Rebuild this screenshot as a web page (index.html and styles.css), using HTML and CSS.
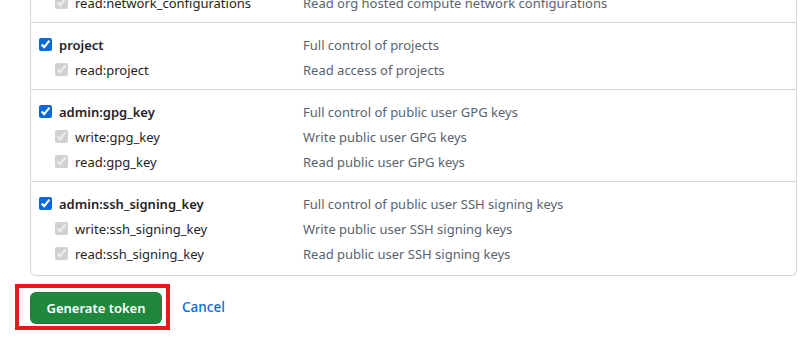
FILE: index.html
```html
<!DOCTYPE html>
<html>
<head>
<meta charset="utf-8">
<title>New token scopes</title>
<link rel="stylesheet" href="styles.css">
</head>
<body>
<div class="scopes">
	<div class="group group-cut">
		<div class="row child">
			<label><input type="checkbox" checked disabled>read:network_configurations</label>
			<span class="desc">Read org hosted compute network configurations</span>
		</div>
	</div>
	<div class="group">
		<div class="row parent">
			<label><input type="checkbox" checked>project</label>
			<span class="desc">Full control of projects</span>
		</div>
		<div class="row child">
			<label><input type="checkbox" checked disabled>read:project</label>
			<span class="desc">Read access of projects</span>
		</div>
	</div>
	<div class="group">
		<div class="row parent">
			<label><input type="checkbox" checked>admin:gpg_key</label>
			<span class="desc">Full control of public user GPG keys</span>
		</div>
		<div class="row child">
			<label><input type="checkbox" checked disabled>write:gpg_key</label>
			<span class="desc">Write public user GPG keys</span>
		</div>
		<div class="row child">
			<label><input type="checkbox" checked disabled>read:gpg_key</label>
			<span class="desc">Read public user GPG keys</span>
		</div>
	</div>
	<div class="group group-last">
		<div class="row parent">
			<label><input type="checkbox" checked>admin:ssh_signing_key</label>
			<span class="desc">Full control of public user SSH signing keys</span>
		</div>
		<div class="row child">
			<label><input type="checkbox" checked disabled>write:ssh_signing_key</label>
			<span class="desc">Write public user SSH signing keys</span>
		</div>
		<div class="row child">
			<label><input type="checkbox" checked disabled>read:ssh_signing_key</label>
			<span class="desc">Read public user SSH signing keys</span>
		</div>
	</div>
</div>

<div class="actions">
	<div class="highlight">
		<button class="btn-primary">Generate token</button>
	</div>
	<a href="#" class="btn-cancel">Cancel</a>
</div>
</body>
</html>
```

FILE: styles.css
```css
body {
	margin: 0;
	background: #fff;
	font-family: "Noto Sans", "Open Sans", Arial, sans-serif;
	font-size: 13px;
	color: #1f2328;
}
.scopes {
	margin: -19px 7px 0 30px;
	border: 1px solid #d1d9e0;
	border-top: 0;
	border-radius: 0 0 6px 6px;
}
.group {
	padding: 9px 0 7px;
	border-top: 1px solid #d1d9e0;
}
.group-cut {
	border-top: 0;
}
.group-last {
	padding-bottom: 9px;
}
.row {
	display: grid;
	grid-template-columns: 264px 1fr;
	align-items: center;
	height: 25px;
	padding-left: 8px;
}
.row label {
	display: flex;
	align-items: center;
	white-space: nowrap;
}
.row input {
	width: 13px;
	height: 13px;
	margin: 0 7px 0 0;
	accent-color: #0969da;
}
.parent label {
	font-weight: 600;
}
.child label {
	padding-left: 16px;
}
.desc {
	color: #59636e;
}
.actions {
	display: flex;
	align-items: center;
	margin: 8px 0 0 15px;
}
.highlight {
	border: 4px solid #e8191d;
	padding: 4px 4px 2px 11px;
}
.btn-primary {
	display: block;
	width: 132px;
	height: 32px;
	border: 1px solid rgba(31, 35, 40, 0.15);
	border-radius: 6px;
	background: #1f883d;
	color: #fff;
	font-family: inherit;
	font-size: 13px;
	font-weight: 600;
	cursor: pointer;
}
.btn-cancel {
	margin-left: 12px;
	color: #0969da;
	font-size: 13.5px;
	font-weight: 500;
	text-decoration: none;
}
```
